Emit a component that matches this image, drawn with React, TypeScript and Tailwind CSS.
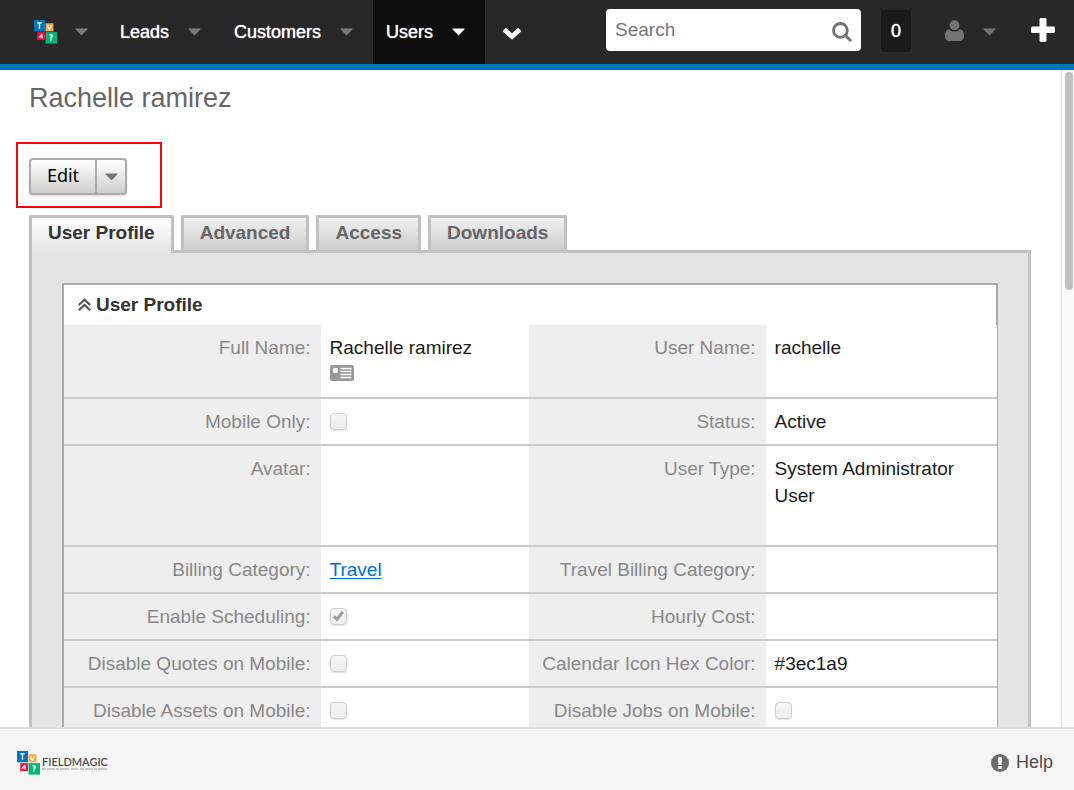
import { useState } from 'react'
import type { ReactNode } from 'react'
import clsx from 'clsx'

type Field = {
  label: string
  value?: string
  href?: string
  card?: boolean
  checkbox?: boolean
  checked?: boolean
}

type Row = {
  height: string
  left: Field
  right: Field
}

const navItems = ['Leads', 'Customers', 'Users']

const tabs = ['User Profile', 'Advanced', 'Access', 'Downloads']

const rows: Row[] = [
  {
    height: 'h-[73px]',
    left: { label: 'Full Name', value: 'Rachelle ramirez', card: true },
    right: { label: 'User Name', value: 'rachelle' },
  },
  {
    height: 'h-[47px]',
    left: { label: 'Mobile Only', checkbox: true },
    right: { label: 'Status', value: 'Active' },
  },
  {
    height: 'h-[101px]',
    left: { label: 'Avatar' },
    right: { label: 'User Type', value: 'System Administrator User' },
  },
  {
    height: 'h-[47px]',
    left: { label: 'Billing Category', value: 'Travel', href: '#travel' },
    right: { label: 'Travel Billing Category' },
  },
  {
    height: 'h-[47px]',
    left: { label: 'Enable Scheduling', checkbox: true, checked: true },
    right: { label: 'Hourly Cost' },
  },
  {
    height: 'h-[47px]',
    left: { label: 'Disable Quotes on Mobile', checkbox: true },
    right: { label: 'Calendar Icon Hex Color', value: '#3ec1a9' },
  },
  {
    height: 'h-[47px]',
    left: { label: 'Disable Assets on Mobile', checkbox: true },
    right: { label: 'Disable Jobs on Mobile', checkbox: true },
  },
]

function Caret({ className }: { className?: string }) {
  return (
    <svg viewBox="0 0 13 8" className={clsx('h-2 w-[13px] shrink-0 fill-current', className)} aria-hidden="true">
      <path d="M1.2 0.5H11.8C12.6 0.5 12.8 1.1 12.3 1.6L7 7.1C6.7 7.4 6.3 7.4 6 7.1L0.7 1.6C0.2 1.1 0.4 0.5 1.2 0.5Z" />
    </svg>
  )
}

function LogoMark() {
  return (
    <svg viewBox="0 0 24 25" className="h-6 w-[23px] shrink-0" aria-hidden="true">
      <rect x="0" y="0" width="11.5" height="11.8" fill="#0076b6" />
      <rect x="12" y="3.4" width="8.3" height="8.4" fill="#fba645" />
      <rect x="3.4" y="12.6" width="8" height="8.2" fill="#ff0a3a" />
      <rect x="12" y="12.6" width="12" height="12" fill="#00b778" />
      <path d="M3.4 3H8M5.7 3V9" stroke="#fff" strokeWidth="1.4" fill="none" />
      <path d="M14.6 5.5V7.4C14.6 9.6 17.6 9.6 17.6 7.4V5.5M16.1 7.7V10.5" stroke="#fff" strokeWidth="1.1" fill="none" />
      <path d="M8.4 14.5L5.6 17.7H9.4M8.3 15V19" stroke="#fff" strokeWidth="1.1" fill="none" />
      <path d="M16 15.8C17 14.6 19.8 15.1 19.4 17C19.2 17.9 18.4 18 17.6 17.9M18.2 15.2L17.4 22" stroke="#fff" strokeWidth="1.4" fill="none" opacity=".85" />
    </svg>
  )
}

function UserIcon() {
  return (
    <svg viewBox="0 0 19 21" className="h-[21px] w-[19px] fill-[#737373]" aria-hidden="true">
      <circle cx="9.5" cy="5.2" r="5" />
      <path d="M4.2 9.3C5.5 10.8 7.3 11.6 9.5 11.6C11.7 11.6 13.5 10.8 14.8 9.3C17.8 9.5 19 12.6 19 16.6C19 19.3 17.6 21 15.3 21H3.7C1.4 21 0 19.3 0 16.6C0 12.6 1.2 9.5 4.2 9.3Z" />
    </svg>
  )
}

function CardIcon() {
  return (
    <svg viewBox="0 0 24 16" className="mt-1 block h-4 w-6" aria-hidden="true">
      <rect width="24" height="16" rx="2.5" fill="#999" />
      <rect x="3" y="3" width="5" height="5" rx="1" fill="#fff" />
      <path d="M10.5 3.5H21.5M10.5 6.5H21.5M10.5 9.5H21.5M10.5 12.5H21.5" stroke="#fff" strokeWidth="1.3" />
    </svg>
  )
}

function FieldCells({ field }: { field: Field }) {
  const id = field.label.toLowerCase().replace(/ /g, '-')
  let content: ReactNode = field.value

  if (field.checkbox) {
    content = (
      <span className="relative mt-[5px] block h-[17px] w-[17px]">
        <input
          id={id}
          type="checkbox"
          disabled
          defaultChecked={field.checked}
          className="peer block h-[17px] w-[17px] appearance-none rounded-[4px] border border-[#cfcfcf] bg-linear-to-b from-[#f6f6f6] to-[#ededed] shadow-[0_1px_1px_#e2e2e2]"
        />
        <svg
          viewBox="0 0 17 17"
          className="pointer-events-none absolute inset-0 hidden h-[17px] w-[17px] peer-checked:block"
          aria-hidden="true"
        >
          <path d="M3.8 8.4L7 11.4L12.8 3.9" fill="none" stroke="#999" strokeWidth="3" />
        </svg>
      </span>
    )
  } else if (field.href) {
    content = (
      <a href={field.href} className="text-[#0070e0] underline underline-offset-2">
        {field.value}
      </a>
    )
  }

  return (
    <>
      <th scope="row" className="bg-[#eeeeee] py-[9px] pr-[10px] text-right align-top font-normal whitespace-nowrap text-[#888888]">
        {field.checkbox ? <label htmlFor={id}>{field.label}:</label> : `${field.label}:`}
      </th>
      <td className="py-[9px] pr-[10px] pl-[9px] align-top text-[#1a1a1a]">
        {content}
        {field.card && <CardIcon />}
      </td>
    </>
  )
}

function Header() {
  return (
    <header className="flex shrink-0 items-stretch border-b-[6px] border-[#0079b8] bg-[#282828]">
      <nav className="flex h-16 items-stretch pl-[21px]">
        <button type="button" aria-label="Home menu" className="flex items-center gap-[18px] pr-[19px] pl-[13px] text-[#7a7a7a]">
          <LogoMark />
          <Caret />
        </button>
        {navItems.map((item) => (
          <button
            key={item}
            type="button"
            className={clsx(
              'flex items-center gap-[19px] pr-5 pl-[13px] text-lg',
              item === 'Users' ? 'bg-[#0e0e0e] text-white' : 'text-[#7a7a7a]'
            )}
          >
            <span className="text-white [text-shadow:0_0_1px_#ffffff]">{item}</span>
            <Caret />
          </button>
        ))}
        <button type="button" aria-label="More" className="px-[17px] pt-0.5">
          <svg viewBox="0 0 20 13" className="h-[13px] w-5" aria-hidden="true">
            <path d="M2.2 2.4L10 9.6L17.8 2.4" fill="none" stroke="#fff" strokeWidth="4.8" />
          </svg>
        </button>
      </nav>

      <div className="ml-auto flex items-center pr-[19px]">
        <form role="search" className="-mt-1 mr-5 flex h-[42px] w-[255px] items-center rounded bg-white pr-[9px] pl-[9px]">
          <input
            type="search"
            aria-label="Search"
            placeholder="Search"
            className="min-w-0 flex-1 bg-transparent text-[19px] leading-7 outline-none placeholder:text-[#757575]"
          />
          <button type="button" aria-label="Run search" className="pt-1">
            <svg viewBox="0 0 20 20" className="h-5 w-5" aria-hidden="true">
              <circle cx="8.4" cy="8.4" r="6.9" fill="none" stroke="#737373" strokeWidth="2.8" />
              <path d="M13.3 13.3L18.2 18.2" stroke="#737373" strokeWidth="3" strokeLinecap="round" />
            </svg>
          </button>
        </form>
        <button type="button" aria-label="Notifications" className="-mt-0.5 mr-[34px] h-[42px] w-[30px] rounded bg-[#1a1a1a] text-lg text-white [text-shadow:0_0_1px_#ffffff]">
          0
        </button>
        <button type="button" aria-label="Account" className="mr-[35px] flex items-center gap-[19px] text-[#737373]">
          <span className="pb-1">
            <UserIcon />
          </span>
          <Caret />
        </button>
        <button type="button" aria-label="Add" className="pb-1">
          <svg viewBox="0 0 24 24" className="h-6 w-6 fill-white" aria-hidden="true">
            <path d="M10.2 0H13.8C15 0 15.5 0.6 15.5 1.7V8.5H22.3C23.4 8.5 24 9 24 10.2V13.3C24 14.5 23.4 15 22.3 15H15.5V22.3C15.5 23.4 15 24 13.8 24H10.2C9 24 8.5 23.4 8.5 22.3V15H1.7C0.6 15 0 14.5 0 13.3V10.2C0 9 0.6 8.5 1.7 8.5H8.5V1.7C8.5 0.6 9 0 10.2 0Z" />
          </svg>
        </button>
      </div>
    </header>
  )
}

function Footer() {
  return (
    <footer className="flex shrink-0 items-center justify-between border-t-2 border-[#dcdcdc] bg-[#f6f6f6] pt-5 pr-[21px] pb-[14px] pl-[17px]">
      <a href="#home" className="flex items-center gap-0.5 text-[#4c4c4c]">
        <LogoMark />
        <span className="flex flex-col">
          <span className="font-['Lato',sans-serif] text-[11px] leading-3 font-semibold">FIELDMAGIC</span>
          <svg viewBox="0 0 66 2" className="h-0.5 w-[66px]" aria-hidden="true">
            <path d="M0 1H66" stroke="#9a9a9a" strokeWidth="1.2" strokeDasharray="4 1 8 1 3 1 9 2 7 2" />
          </svg>
        </span>
      </a>
      <a href="#help" className="flex items-center gap-[7px] text-lg leading-[27px] text-[#4c4c4c]">
        <svg viewBox="0 0 18 18" className="h-[18px] w-[18px]" aria-hidden="true">
          <circle cx="9" cy="9" r="9" fill="#6e6e6e" />
          <path d="M7 3.2H11L10.6 11H7.4Z" fill="#f6f6f6" />
          <rect x="7.1" y="12.2" width="3.8" height="2.8" rx=".6" fill="#f6f6f6" />
        </svg>
        Help
      </a>
    </footer>
  )
}

export default function App() {
  const [activeTab, setActiveTab] = useState('User Profile')

  return (
    <div className="flex h-screen flex-col bg-white font-['Liberation_Sans',Arial,sans-serif] text-[19px] leading-[27px]">
      <Header />

      <div className="flex min-h-0 flex-1">
        <main className="min-w-0 flex-1 overflow-y-auto pt-[10px] pr-[30px] pl-[29px] [scrollbar-width:none]">
          <h1 className="text-[27px] leading-9 text-[#666666]">Rachelle ramirez</h1>

          {/* Actions */}
          <div className="mt-[26px] -ml-[13px] w-[146px] border-2 border-[#ff0010] pt-[14px] pb-[11px] pl-[11px]">
            <div className="flex h-[37px] w-[98px] rounded border-2 border-[#aaaaaa] bg-linear-to-b from-white to-[#d0cfce] shadow-[0_1px_2px_#dddddd]">
              <button type="button" className="flex-1 border-r-2 border-[#aaaaaa] pb-1 font-['Noto_Sans',sans-serif] text-lg leading-7 text-black">
                Edit
              </button>
              <button type="button" aria-label="More actions" className="flex w-7 items-center justify-center text-[#757575]">
                <Caret />
              </button>
            </div>
          </div>

          {/* Tabs */}
          <div role="tablist" className="mt-[7px] flex items-start gap-[7px]">
            {tabs.map((tab) => (
              <button
                key={tab}
                type="button"
                role="tab"
                aria-selected={tab === activeTab}
                onClick={() => setActiveTab(tab)}
                className={clsx(
                  'rounded-t-xs border-[3px] border-b-0 border-[#c1c1c1] bg-linear-to-b px-4 font-bold',
                  tab === activeTab
                    ? 'relative -mb-[3px] from-white to-[#e4e4e4] pt-px pb-[7px] text-[#333333]'
                    : 'from-[#f0f0f0] to-[#cecece] pt-px pb-1 text-[#666666]'
                )}
              >
                {tab}
              </button>
            ))}
          </div>

          <section className="border-[3px] border-[#c1c1c1] bg-[#e4e4e4] p-[30px]">
            <h2 className="border-2 border-b-0 border-[#aaaaaa] bg-white pt-[6px] pb-[7px] pl-[14px] text-[#333333]">
              <button type="button" className="flex items-center gap-[5px] font-bold">
                <svg viewBox="0 0 13 13" className="h-[13px] w-[13px]" aria-hidden="true">
                  <path d="M0.8 7L6.5 1.8L12.2 7M0.8 12.2L6.5 7L12.2 12.2" fill="none" stroke="#555" strokeWidth="2.2" />
                </svg>
                User Profile
              </button>
            </h2>
            <div className="border-r border-l-2 border-[#aaaaaa] bg-white">
              <table className="w-full table-fixed border-collapse">
                <colgroup>
                  <col className="w-[27.5%]" />
                  <col className="w-[22.3%]" />
                  <col className="w-[25.4%]" />
                  <col />
                </colgroup>
                <tbody>
                  {rows.map((row) => (
                    <tr key={row.left.label} className={clsx('border-b-2 border-[#cbcbcb]', row.height)}>
                      <FieldCells field={row.left} />
                      <FieldCells field={row.right} />
                    </tr>
                  ))}
                </tbody>
              </table>
            </div>
          </section>
        </main>

        {/* Scroll track */}
        <div aria-hidden="true" className="w-[13px] shrink-0 border-l border-[#e8e8e8] bg-[#fafafa] pt-0.5 pr-px pl-[3px]">
          <div className="h-1/3 rounded-full bg-[#c1c1c1]" />
        </div>
      </div>

      <Footer />
    </div>
  )
}
